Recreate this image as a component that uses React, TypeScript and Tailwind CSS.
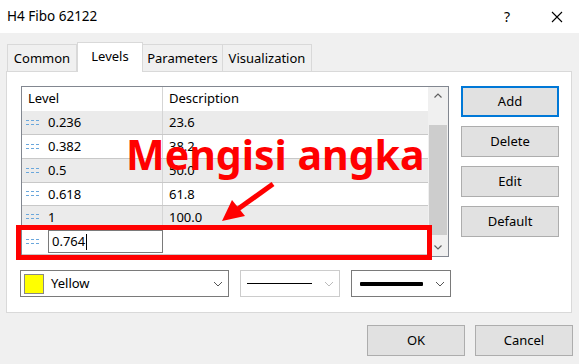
import React from "react";

const levels: [string, string, number][] = [
  ["0.236", "23.6", 24],
  ["0.382", "38.2", 24],
  ["0.5", "50.0", 24],
  ["0.618", "61.8", 23],
  ["1", "100.0", 23],
];

function Dots() {
  return (
    <svg width="16" height="6" viewBox="0 0 16 6" className="shrink-0">
      {[0, 5, 10].map((x) =>
        [0, 4].map((y) => (
          <rect key={`${x}-${y}`} x={x} y={y} width="3" height="1" fill="#6aa7dc" />
        ))
      )}
    </svg>
  );
}

function Chevron({ color = "#555" }: { color?: string }) {
  return (
    <svg width="10" height="6" viewBox="0 0 10 6">
      <path d="M1 1 L5 5 L9 1" fill="none" stroke={color} strokeWidth="1" />
    </svg>
  );
}

function Btn({ label, primary }: { label: string; primary?: boolean }) {
  return (
    <div
      className={`w-[98px] h-[31px] flex items-center justify-center bg-[#e1e1e1] text-black ${
        primary ? "border-2 border-[#0078d7]" : "border border-[#adadad]"
      }`}
    >
      {label}
    </div>
  );
}

export default function App() {
  return (
    <div className="relative w-[579px] h-[364px] bg-[#f0f0f0] overflow-hidden font-['Noto_Sans',sans-serif] text-[13px] text-black">
      {/* Title bar */}
      <div className="h-[33px] bg-white flex items-center pl-[7px] pr-[16px]">
        <span className="text-[13.5px]">H4 Fibo 62122</span>
        <div className="ml-auto flex items-center gap-[41px]">
          <span className="text-[14px]">?</span>
          <svg width="12" height="12" viewBox="0 0 12 12">
            <path d="M1 1 L11 11 M11 1 L1 11" stroke="#000" strokeWidth="1.1" />
          </svg>
        </div>
      </div>

      {/* Tabs */}
      <div className="flex items-end pl-[7px] mt-[10px] h-[28px] relative z-10">
        <div className="w-[70px] h-[27px] border border-b-0 border-[#d9d9d9] bg-[#f0f0f0] flex items-center justify-center pt-[2px]">
          Common
        </div>
        <div className="w-[66px] h-[30px] border border-b-0 border-[#d9d9d9] bg-white flex items-start justify-center pt-[4px] mb-[-1px]">
          Levels
        </div>
        <div className="w-[80px] h-[27px] border border-b-0 border-l-0 border-[#d9d9d9] bg-[#f0f0f0] flex items-center justify-center pt-[2px]">
          Parameters
        </div>
        <div className="w-[89px] h-[27px] border border-b-0 border-l-0 border-[#d9d9d9] bg-[#f0f0f0] flex items-center justify-center pt-[2px]">
          Visualization
        </div>
      </div>

      {/* Panel */}
      <div className="ml-[6px] w-[566px] h-[242px] bg-white border border-[#d9d9d9] pl-[14px] pt-[14px]">
        <div className="flex gap-[12px]">
          {/* List */}
          <div className="w-[428px] h-[171px] border border-[#828790] flex">
            <div className="flex-1 flex flex-col">
              <div className="h-[24px] flex items-center bg-white">
                <div className="w-[141px] h-full border-r border-[#d5d5d5] pl-[6px] flex items-center">Level</div>
                <div className="pl-[6px]">Description</div>
              </div>
              {levels.map(([lv, desc, h], i) => (
                <div
                  key={lv}
                  style={{ height: h }}
                  className={`flex border-b border-[#c8c8c8] ${i % 2 === 0 ? "bg-[#ebebeb]" : "bg-white"}`}
                >
                  <div className="w-[141px] border-r border-[#d5d5d5] pl-[4px] flex items-center gap-[6px]">
                    <Dots />
                    <span className="pt-[1px]">{lv}</span>
                  </div>
                  <div className="pl-[6px] flex items-center pt-[1px]">{desc}</div>
                </div>
              ))}
              <div className="h-[26px] flex items-center border-b border-[#c8c8c8] bg-white">
                <div className="w-[141px] h-full pl-[4px] flex items-center gap-[6px]">
                  <Dots />
                  <div className="w-[116px] h-[23px] border border-[#7a7a7a] flex items-center pl-[3px]">
                    <span>0.764</span>
                    <span className="w-[1px] h-[16px] bg-black ml-[1px]" />
                  </div>
                </div>
                <div className="flex-1" />
              </div>
            </div>
            {/* Scrollbar */}
            <div className="w-[20px] bg-[#f0f0f0] flex flex-col">
              <div className="h-[17px] flex items-center justify-center">
                <svg width="8" height="5" viewBox="0 0 8 5">
                  <path d="M0.5 4.5 L4 1 L7.5 4.5" fill="none" stroke="#606060" strokeWidth="1.2" />
                </svg>
              </div>
              <div className="flex-1 pt-[21px] px-[1px]">
                <div className="h-[110px] bg-[#cdcdcd]" />
              </div>
              <div className="h-[17px] flex items-center justify-center">
                <svg width="8" height="5" viewBox="0 0 8 5">
                  <path d="M0.5 0.5 L4 4 L7.5 0.5" fill="none" stroke="#606060" strokeWidth="1.2" />
                </svg>
              </div>
            </div>
          </div>
          {/* Buttons */}
          <div className="flex flex-col gap-[9px]">
            <Btn label="Add" primary />
            <Btn label="Delete" />
            <Btn label="Edit" />
            <Btn label="Default" />
          </div>
        </div>

        {/* Dropdowns */}
        <div className="flex items-center mt-[13px] ml-[-1px] gap-[11px]">
          <div className="w-[209px] h-[27px] border border-[#7a7a7a] flex items-center pl-[3px] pr-[5px]">
            <div className="w-[20px] h-[20px] bg-[#ffff00] border border-[#888]" />
            <span className="ml-[7px]">Yellow</span>
            <div className="ml-auto">
              <Chevron />
            </div>
          </div>
          <div className="w-[100px] h-[27px] border border-[#cccccc] flex items-center pl-[6px] pr-[5px]">
            <div className="w-[65px] h-[1px] bg-black" />
            <div className="ml-auto">
              <Chevron color="#bbb" />
            </div>
          </div>
          <div className="w-[100px] h-[27px] border border-[#7a7a7a] flex items-center pl-[8px] pr-[5px]">
            <div className="w-[63px] h-[4px] bg-black rounded-[1px]" />
            <div className="ml-auto">
              <Chevron />
            </div>
          </div>
        </div>
      </div>

      {/* Bottom buttons */}
      <div className="flex justify-end gap-[10px] pr-[6px] mt-[12px]">
        <div className="w-[98px] h-[31px] flex items-center justify-center bg-[#e1e1e1] border border-[#adadad]">OK</div>
        <div className="w-[98px] h-[31px] flex items-center justify-center bg-[#e1e1e1] border border-[#adadad]">Cancel</div>
      </div>

      {/* Annotation overlay */}
      <div className="absolute left-[16px] top-[225px] w-[416px] h-[35px] border-[5px] border-[#ff0000]" />
      <div className="absolute left-[126px] top-[128px] text-[41px] leading-[52px] font-bold text-[#ff0000] whitespace-nowrap">
        Mengisi angka
      </div>
      <svg className="absolute left-0 top-0" width="579" height="364" viewBox="0 0 579 364">
        <path d="M273 184 L238 209" stroke="#ff0000" strokeWidth="5" />
        <path d="M222 221 L232 200 L245 216 Z" fill="#ff0000" />
      </svg>
    </div>
  );
}
